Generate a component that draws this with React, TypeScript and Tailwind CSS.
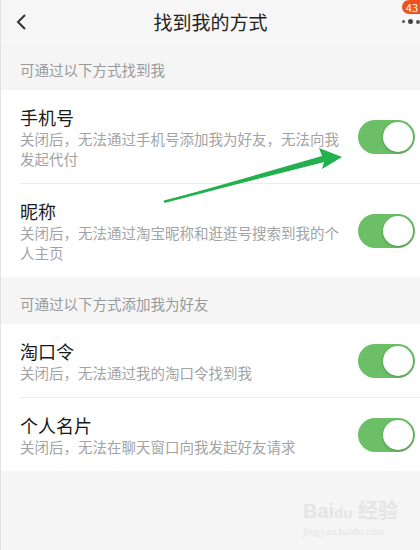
import React from 'react';

const FONT = { fontFamily: '"Noto Sans CJK SC", "Noto Sans", sans-serif' };

type Item = { title: string; desc: string; last?: boolean };

const Toggle = () => (
  <div className="relative h-[34px] w-[57px] shrink-0 rounded-full bg-[#6bbf66]">
    <div className="absolute right-[2px] top-[2px] h-[30px] w-[30px] rounded-full bg-white shadow-[0_1px_3px_rgba(0,0,0,0.25)]" />
  </div>
);

const Row = ({ title, desc, last }: Item) => (
  <div className="pl-[19px]">
    <div className={`flex items-center pr-[5px] pt-[15px] pb-[14px] ${last ? '' : 'border-b border-[#ececec]'}`}>
      <div className="flex-1">
        <div className="text-[18px] leading-[24px] text-[#1a1a1a]">{title}</div>
        <div className="w-[325px] text-[14.5px] leading-[20px] text-[#a3a3a3]">{desc}</div>
      </div>
      <Toggle />
    </div>
  </div>
);

const SectionHeader = ({ text, top }: { text: string; top: string }) => (
  <div className={`px-[19px] pb-[10px] text-[14.5px] leading-[20px] text-[#9a9a9a] ${top}`}>{text}</div>
);

const findMe: Item[] = [
  { title: '手机号', desc: '关闭后，无法通过手机号添加我为好友，无法向我发起代付' },
  { title: '昵称', desc: '关闭后，无法通过淘宝昵称和逛逛号搜索到我的个人主页', last: true },
];

const addMe: Item[] = [
  { title: '淘口令', desc: '关闭后，无法通过我的淘口令找到我' },
  { title: '个人名片', desc: '关闭后，无法在聊天窗口向我发起好友请求', last: true },
];

export default function App() {
  return (
    <div className="relative h-[550px] w-[420px] overflow-hidden border-l border-[#e2e2e2] bg-[#f5f5f5]" style={FONT}>
      {/* nav bar */}
      <div className="relative flex h-[45px] items-center justify-center bg-[#f6f6f6]">
        <svg className="absolute left-[14px] top-[13px]" width="14" height="18" viewBox="0 0 14 18">
          <polyline points="10,2 3,9 10,16" fill="none" stroke="#333" strokeWidth="2" />
        </svg>
        <span className="text-[19px] text-[#222]">找到我的方式</span>
        <div className="absolute right-0 top-0 flex h-[14px] items-center justify-center rounded-l-full bg-[#f0521e] pl-[4px] pr-[2px] text-[11px] leading-none text-white">
          43
        </div>
        <div className="absolute right-0 top-[19px] flex items-center gap-[3px]">
          <span className="h-[3px] w-[3px] rounded-full bg-[#555]" />
          <span className="h-[5px] w-[5px] rounded-full bg-[#444]" />
          <span className="h-[4px] w-[4px] rounded-full bg-[#555]" />
        </div>
      </div>

      <SectionHeader text="可通过以下方式找到我" top="pt-[15px]" />
      <div className="bg-white">
        {findMe.map((it) => (
          <Row key={it.title} {...it} />
        ))}
      </div>

      <SectionHeader text="可通过以下方式添加我为好友" top="pt-[17px]" />
      <div className="bg-white">
        {addMe.map((it) => (
          <Row key={it.title} {...it} />
        ))}
      </div>

      {/* watermark */}
      <div className="absolute left-[302px] top-[500px] text-[#e4e4e4]">
        <div className="text-[20px] font-bold leading-[22px]" style={{ fontFamily: '"Liberation Sans", "Noto Sans CJK SC", sans-serif' }}>
          Bai<span className="text-[15px]">du</span> 经验
        </div>
        <div className="text-[11px] leading-[14px]" style={{ fontFamily: '"Liberation Serif", serif' }}>
          jingyan.baidu.com
        </div>
      </div>

      {/* annotation arrow */}
      <svg className="pointer-events-none absolute left-0 top-0" width="420" height="550" viewBox="0 0 420 550">
        <polygon points="164,202 323,162 321,169 341,157 318,148 321,156 164,201" fill="#22b14c" />
        <path d="M164 201.5 L325 160" stroke="#22b14c" strokeWidth="2.5" strokeLinecap="round" />
      </svg>
    </div>
  );
}
